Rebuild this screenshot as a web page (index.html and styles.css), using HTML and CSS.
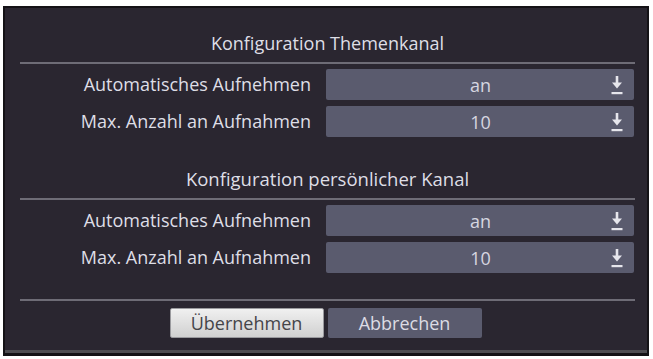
FILE: index.html
```html
<!DOCTYPE html>
<html lang="de">
<head>
<meta charset="utf-8">
<link rel="stylesheet" href="styles.css">
</head>
<body>
<div class="panel">
  <div class="section-title">Konfiguration Themenkanal</div>
  <div class="sep"></div>
  <div class="rows">
    <div class="label">Automatisches Aufnehmen</div>
    <div class="select"><span class="val">an</span><svg class="arrow" viewBox="0 0 12 20" width="12" height="20"><path d="M6 1 V11" stroke="#e6e6ec" stroke-width="2.6" fill="none"/><path d="M1 7.5 L6 13.5 L11 7.5 Z" fill="#e6e6ec"/><rect x="0.5" y="17" width="11" height="2.2" fill="#e6e6ec"/></svg></div>
    <div class="label">Max. Anzahl an Aufnahmen</div>
    <div class="select"><span class="val">10</span><svg class="arrow" viewBox="0 0 12 20" width="12" height="20"><path d="M6 1 V11" stroke="#e6e6ec" stroke-width="2.6" fill="none"/><path d="M1 7.5 L6 13.5 L11 7.5 Z" fill="#e6e6ec"/><rect x="0.5" y="17" width="11" height="2.2" fill="#e6e6ec"/></svg></div>
  </div>
  <div class="section-title second">Konfiguration persönlicher Kanal</div>
  <div class="sep"></div>
  <div class="rows">
    <div class="label">Automatisches Aufnehmen</div>
    <div class="select"><span class="val">an</span><svg class="arrow" viewBox="0 0 12 20" width="12" height="20"><path d="M6 1 V11" stroke="#e6e6ec" stroke-width="2.6" fill="none"/><path d="M1 7.5 L6 13.5 L11 7.5 Z" fill="#e6e6ec"/><rect x="0.5" y="17" width="11" height="2.2" fill="#e6e6ec"/></svg></div>
    <div class="label">Max. Anzahl an Aufnahmen</div>
    <div class="select"><span class="val">10</span><svg class="arrow" viewBox="0 0 12 20" width="12" height="20"><path d="M6 1 V11" stroke="#e6e6ec" stroke-width="2.6" fill="none"/><path d="M1 7.5 L6 13.5 L11 7.5 Z" fill="#e6e6ec"/><rect x="0.5" y="17" width="11" height="2.2" fill="#e6e6ec"/></svg></div>
  </div>
  <div class="sep bottom"></div>
  <div class="buttons">
    <div class="btn primary">Übernehmen</div>
    <div class="btn">Abbrechen</div>
  </div>
</div>
</body>
</html>
```

FILE: styles.css
```css
html, body {
  margin: 0;
  padding: 0;
  background: #ffffff;
}
body {
  font-family: "Open Sans", "DejaVu Sans", sans-serif;
  padding: 6px 0 0 3px;
}
.panel {
  box-sizing: border-box;
  width: 646px;
  height: 350px;
  background: #2a2630;
  border: 2px solid #141216;
  border-bottom: 3px solid #141216;
  box-shadow: inset 0 -3px 0 #4e4d52;
  padding: 0 12px 0 15px;
  color: #dedee6;
}
.section-title {
  text-align: center;
  font-size: 18px;
  line-height: 24px;
  padding-top: 23px;
  letter-spacing: 0;
}
.section-title.second {
  padding-top: 30px;
  font-size: 18.5px;
}
.sep {
  height: 2px;
  background: #6e6c76;
  margin-top: 7px;
}
.sep.bottom {
  margin-top: 26px;
}
.rows {
  display: grid;
  grid-template-columns: 291px 308px;
  column-gap: 15px;
  row-gap: 6px;
  padding-top: 5px;
}
.label {
  text-align: right;
  font-size: 18px;
  line-height: 31px;
  letter-spacing: 0;
}
.select {
  height: 31px;
  background: #5a5b6e;
  border-radius: 2px;
  display: flex;
  align-items: center;
}
.val {
  flex: 1;
  text-align: center;
  font-size: 18px;
  color: #d6d6e0;
  padding-left: 24px;
}
.arrow {
  margin-right: 11px;
  display: block;
}
.buttons {
  display: flex;
  justify-content: center;
  gap: 4px;
  padding-top: 7px;
  padding-right: 4px;
}
.btn {
  width: 154px;
  height: 30px;
  box-sizing: border-box;
  line-height: 30px;
  text-align: center;
  font-size: 18px;
  background: #5a5b6e;
  color: #dcdce4;
  border-radius: 2px;
  letter-spacing: 0;
}
.btn.primary {
  background: linear-gradient(#f0f0f0, #d0d0d0);
  color: #45454a;
  border: 1px solid #9a9a9e;
  line-height: 28px;
}
```
